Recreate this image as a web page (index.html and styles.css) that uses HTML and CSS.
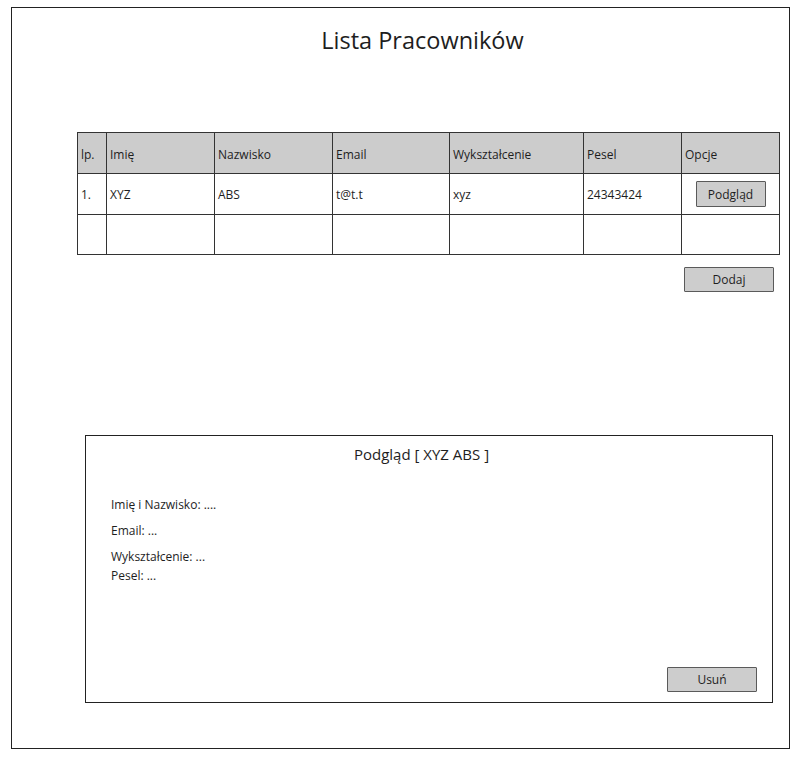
FILE: index.html
```html
<!DOCTYPE html>
<html lang="pl">
<head>
<meta charset="utf-8">
<title>Lista Pracowników</title>
<link rel="stylesheet" href="styles.css">
</head>
<body>
<div class="frame">
  <h1 class="title">Lista Pracowników</h1>
  <table class="grid">
    <colgroup>
      <col class="c-lp"><col class="c-imie"><col class="c-nazw"><col class="c-email"><col class="c-wyk"><col class="c-pesel"><col class="c-opc">
    </colgroup>
    <thead>
      <tr><th>lp.</th><th>Imię</th><th>Nazwisko</th><th>Email</th><th>Wykształcenie</th><th>Pesel</th><th>Opcje</th></tr>
    </thead>
    <tbody>
      <tr><td>1.</td><td>XYZ</td><td>ABS</td><td>t@t.t</td><td>xyz</td><td>24343424</td><td class="opt"><button class="btn btn-small">Podgląd</button></td></tr>
      <tr class="empty"><td></td><td></td><td></td><td></td><td></td><td></td><td></td></tr>
    </tbody>
  </table>
  <div class="actions"><button class="btn">Dodaj</button></div>
  <section class="panel">
    <h2 class="panel-title">Podgląd [ XYZ ABS ]</h2>
    <div class="fields">
      <p class="field f1">Imię i Nazwisko: ....</p>
      <p class="field f2">Email: ...</p>
      <p class="field f3">Wykształcenie: ...</p>
      <p class="field f4">Pesel: ...</p>
    </div>
    <button class="btn btn-del">Usuń</button>
  </section>
</div>
</body>
</html>
```
FILE: styles.css
```css
html, body {
  margin: 0;
  padding: 0;
  background: #ffffff;
}
body {
  font-family: "Open Sans", "DejaVu Sans", sans-serif;
  color: #1e1e1e;
}
.frame {
  margin: 7px 0 0 11px;
  width: 779px;
  height: 742px;
  border: 1px solid #222;
  box-sizing: border-box;
  display: flex;
  flex-direction: column;
  align-items: flex-start;
}
.title {
  margin: 17px 0 0;
  width: 100%;
  box-sizing: border-box;
  padding-left: 44px;
  text-align: center;
  font-size: 23.5px;
  line-height: 30px;
  height: 30px;
  font-weight: 400;
}
.grid {
  margin: 77px 0 0 65px;
  width: 703px;
  border-collapse: collapse;
  table-layout: fixed;
  font-size: 12px;
}
.c-lp { width: 29px; }
.c-imie { width: 108px; }
.c-nazw { width: 118px; }
.c-email { width: 117px; }
.c-wyk { width: 134px; }
.c-pesel { width: 98px; }
.c-opc { width: 98px; }
.grid th, .grid td {
  border: 1px solid #333;
  padding: 0 0 0 3px;
  height: 40px;
  text-align: left;
  font-weight: 400;
  vertical-align: middle;
  white-space: nowrap;
  overflow: hidden;
}
.grid thead th {
  background: #cccccc;
  padding-top: 2px;
  height: 38px;
}
.grid tbody tr.empty td {
  height: 39px;
}
.grid td.opt {
  text-align: center;
  padding: 0;
}
.btn {
  font-family: "Open Sans", "DejaVu Sans", sans-serif;
  font-size: 12px;
  color: #1e1e1e;
  background: #cdcdcd;
  border: 1px solid #5a5a5a;
  border-radius: 1px;
  width: 90px;
  height: 25px;
  padding: 0;
  box-sizing: border-box;
}
.btn-small {
  width: 70px;
  height: 26px;
}
.actions {
  margin: 12px 0 0 65px;
  width: 703px;
  box-sizing: border-box;
  padding-right: 6px;
  display: flex;
  justify-content: flex-end;
}
.panel {
  margin: 143px 0 0 73px;
  width: 688px;
  height: 268px;
  border: 1px solid #222;
  box-sizing: border-box;
  display: flex;
  flex-direction: column;
}
.panel-title {
  margin: 0;
  padding: 8px 15px 0 0;
  text-align: center;
  font-size: 15px;
  line-height: 20px;
  font-weight: 400;
}
.fields {
  padding-left: 25px;
  margin-top: 32px;
  font-size: 12px;
}
.field {
  margin: 0;
  line-height: 18px;
}
.f1, .f2 { margin-bottom: 8px; }
.f3 { margin-bottom: 1px; }
.btn-del {
  margin-top: auto;
  align-self: flex-end;
  margin-right: 15px;
  margin-bottom: 10px;
}
```
